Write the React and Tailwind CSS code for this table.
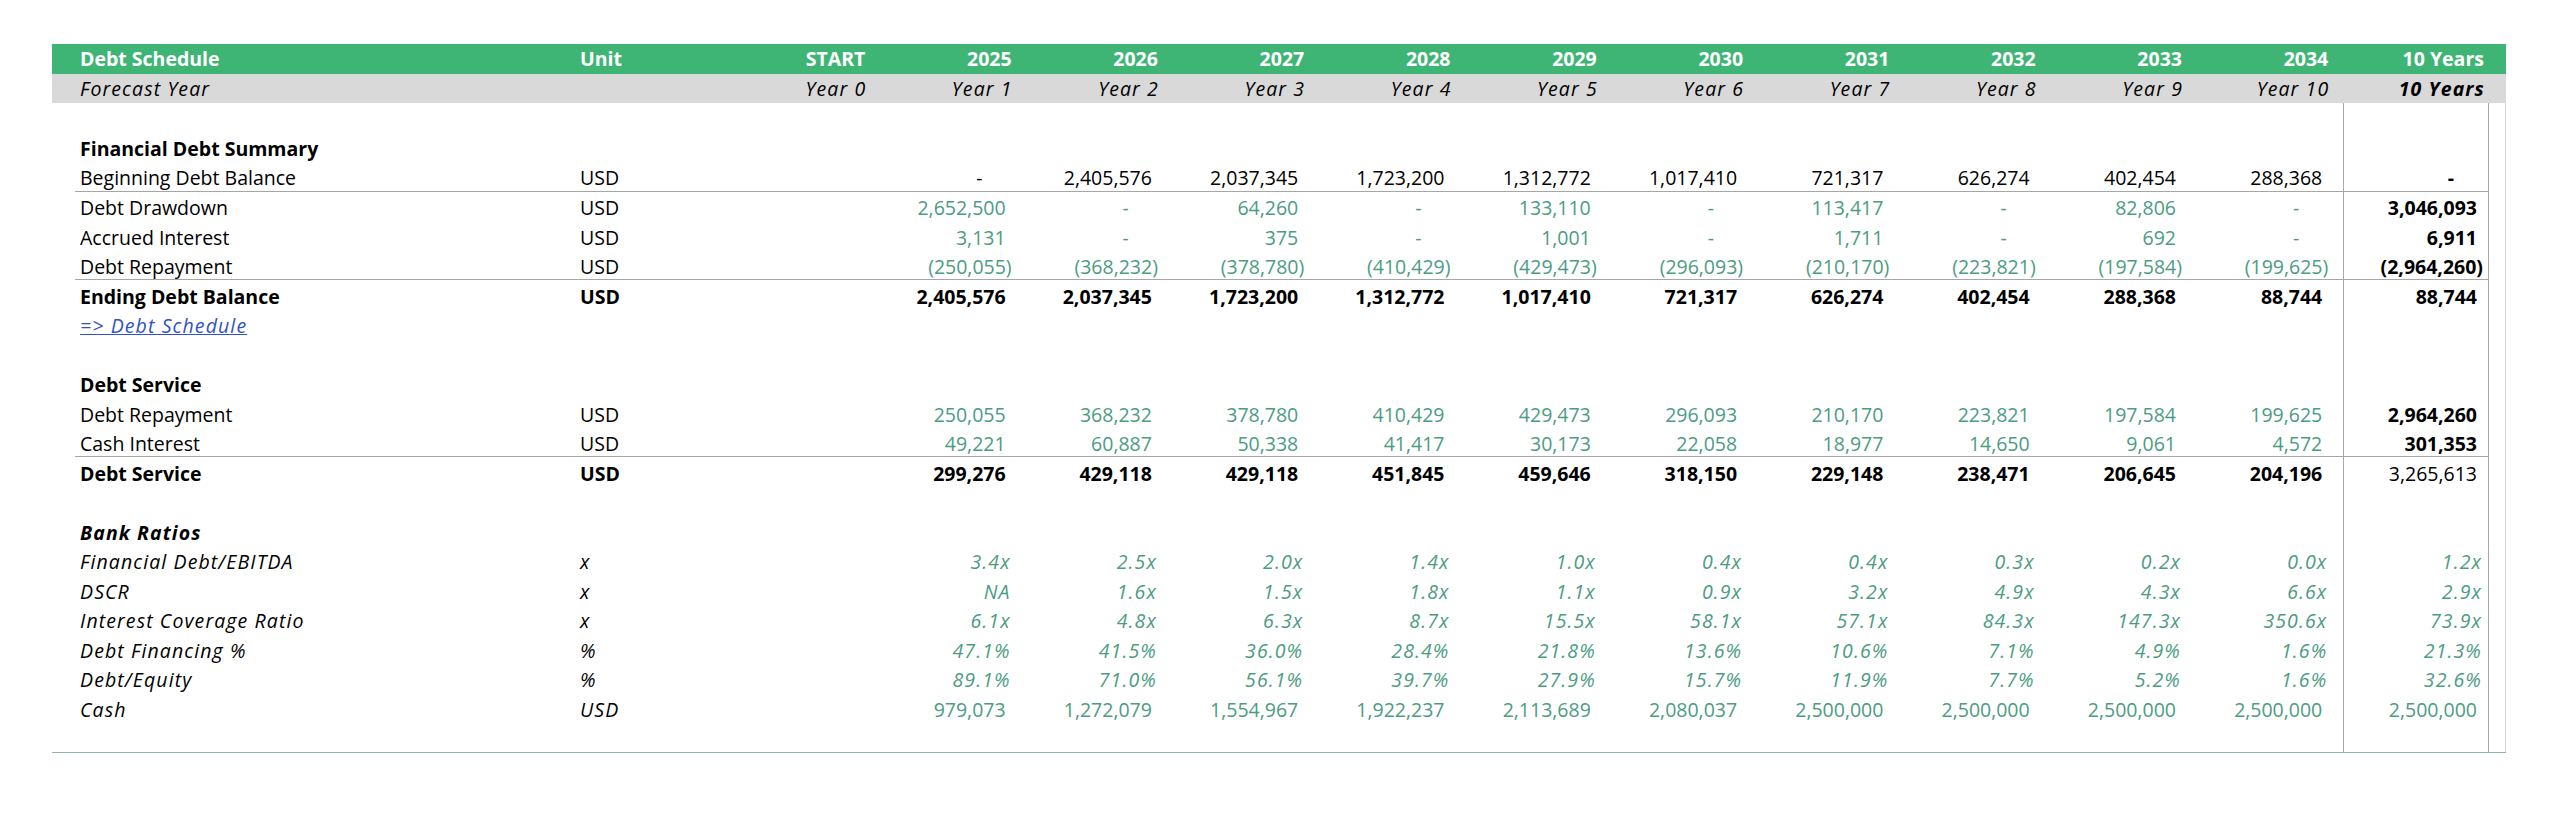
import React from 'react';

const YEARS = ['2025', '2026', '2027', '2028', '2029', '2030', '2031', '2032', '2033', '2034'];

// vals: START, 2025 ... 2034
const rows = [
  { type: 'blank' },
  { type: 'head', label: 'Financial Debt Summary' },
  {
    label: 'Beginning Debt Balance', unit: 'USD', color: 'black', line: true,
    vals: ['', '-', '2,405,576', '2,037,345', '1,723,200', '1,312,772', '1,017,410', '721,317', '626,274', '402,454', '288,368'],
    total: '-', totalBold: true,
  },
  {
    label: 'Debt Drawdown', unit: 'USD', color: 'green',
    vals: ['', '2,652,500', '-', '64,260', '-', '133,110', '-', '113,417', '-', '82,806', '-'],
    total: '3,046,093', totalBold: true,
  },
  {
    label: 'Accrued Interest', unit: 'USD', color: 'green',
    vals: ['', '3,131', '-', '375', '-', '1,001', '-', '1,711', '-', '692', '-'],
    total: '6,911', totalBold: true,
  },
  {
    label: 'Debt Repayment', unit: 'USD', color: 'green', line: true,
    vals: ['', '(250,055)', '(368,232)', '(378,780)', '(410,429)', '(429,473)', '(296,093)', '(210,170)', '(223,821)', '(197,584)', '(199,625)'],
    total: '(2,964,260)', totalBold: true,
  },
  {
    label: 'Ending Debt Balance', unit: 'USD', color: 'black', bold: true,
    vals: ['', '2,405,576', '2,037,345', '1,723,200', '1,312,772', '1,017,410', '721,317', '626,274', '402,454', '288,368', '88,744'],
    total: '88,744', totalBold: true,
  },
  { type: 'link', label: '=> Debt Schedule' },
  { type: 'blank' },
  { type: 'head', label: 'Debt Service' },
  {
    label: 'Debt Repayment', unit: 'USD', color: 'green',
    vals: ['', '250,055', '368,232', '378,780', '410,429', '429,473', '296,093', '210,170', '223,821', '197,584', '199,625'],
    total: '2,964,260', totalBold: true,
  },
  {
    label: 'Cash Interest', unit: 'USD', color: 'green', line: true,
    vals: ['', '49,221', '60,887', '50,338', '41,417', '30,173', '22,058', '18,977', '14,650', '9,061', '4,572'],
    total: '301,353', totalBold: true,
  },
  {
    label: 'Debt Service', unit: 'USD', color: 'black', bold: true,
    vals: ['', '299,276', '429,118', '429,118', '451,845', '459,646', '318,150', '229,148', '238,471', '206,645', '204,196'],
    total: '3,265,613',
  },
  { type: 'blank' },
  { type: 'head', label: 'Bank Ratios', italic: true },
  {
    label: 'Financial Debt/EBITDA', unit: 'x', color: 'green', italic: true, valItalic: true,
    vals: ['', '3.4x', '2.5x', '2.0x', '1.4x', '1.0x', '0.4x', '0.4x', '0.3x', '0.2x', '0.0x'],
    total: '1.2x', totalGreen: true,
  },
  {
    label: 'DSCR', unit: 'x', color: 'green', italic: true, valItalic: true,
    vals: ['', 'NA', '1.6x', '1.5x', '1.8x', '1.1x', '0.9x', '3.2x', '4.9x', '4.3x', '6.6x'],
    total: '2.9x', totalGreen: true,
  },
  {
    label: 'Interest Coverage Ratio', unit: 'x', color: 'green', italic: true, valItalic: true,
    vals: ['', '6.1x', '4.8x', '6.3x', '8.7x', '15.5x', '58.1x', '57.1x', '84.3x', '147.3x', '350.6x'],
    total: '73.9x', totalGreen: true,
  },
  {
    label: 'Debt Financing %', unit: '%', color: 'green', italic: true, valItalic: true,
    vals: ['', '47.1%', '41.5%', '36.0%', '28.4%', '21.8%', '13.6%', '10.6%', '7.1%', '4.9%', '1.6%'],
    total: '21.3%', totalGreen: true,
  },
  {
    label: 'Debt/Equity', unit: '%', color: 'green', italic: true, valItalic: true,
    vals: ['', '89.1%', '71.0%', '56.1%', '39.7%', '27.9%', '15.7%', '11.9%', '7.7%', '5.2%', '1.6%'],
    total: '32.6%', totalGreen: true,
  },
  {
    label: 'Cash', unit: 'USD', color: 'green', italic: true,
    vals: ['', '979,073', '1,272,079', '1,554,967', '1,922,237', '2,113,689', '2,080,037', '2,500,000', '2,500,000', '2,500,000', '2,500,000'],
    total: '2,500,000', totalGreen: true,
  },
  { type: 'blank' },
];

// excel style number padding: room for ")" on positives, dash sits left
function padFor(v, italic) {
  if (v === '-') return 'pr-[34px]';
  if (v.endsWith(')')) return 'pr-[5px]';
  if (italic) return 'pr-[6px]';
  return 'pr-[11px]';
}

// open sans italic runs narrower than the sheet's font, open it up a bit
const IT = 'italic tracking-[1.1px]';

function Shell({ children, line, total }) {
  return (
    <div className="flex h-[29.5px]">
      <div className="w-[23px] shrink-0" />
      <div className={`flex ${line ? 'border-b border-[#a6a6a6]' : ''}`}>
        {children}
        <div className="w-[9.7px] shrink-0" />
        <div className="w-[146px] shrink-0 flex items-center justify-end pt-[3px] border-x border-[#a8a8a8]">
          {total}
        </div>
      </div>
      <div className="w-[17px] shrink-0" />
    </div>
  );
}

function Row({ r }) {
  if (r.type === 'blank') {
    return (
      <Shell>
        <div className="w-[500px] shrink-0" />
        <div className="w-[149px] shrink-0" />
        <div className="w-[1609.3px] shrink-0" />
      </Shell>
    );
  }
  if (r.type === 'head' || r.type === 'link') {
    const cls = r.type === 'link'
      ? `${IT} underline text-[#3152c4]`
      : `font-bold ${r.italic ? IT : ''}`;
    return (
      <Shell>
        <div className={`w-[500px] shrink-0 pl-[5px] flex items-center pt-[3px] ${cls}`}>{r.label}</div>
        <div className="w-[149px] shrink-0" />
        <div className="w-[1609.3px] shrink-0" />
      </Shell>
    );
  }

  const labelCls = `${r.bold ? 'font-bold' : ''} ${r.italic ? IT : ''}`;
  const valColor = r.color === 'green' ? 'text-[#4c9c82]' : 'text-black';
  const totalCls = `${r.totalBold ? 'font-bold' : ''} ${r.totalGreen ? 'text-[#4c9c82]' : 'text-black'} ${r.valItalic ? IT : ''} ${padFor(r.total, r.valItalic)}`;

  return (
    <Shell line={r.line} total={<span className={totalCls}>{r.total}</span>}>
      <div className={`w-[500px] shrink-0 pl-[5px] flex items-center pt-[3px] ${labelCls}`}>{r.label}</div>
      <div className={`w-[149px] shrink-0 pl-[5px] flex items-center pt-[3px] ${labelCls}`}>{r.unit}</div>
      {r.vals.map((v, i) => (
        <div
          key={i}
          className={`w-[146.3px] shrink-0 flex items-center justify-end pt-[3px] ${valColor} ${r.bold ? 'font-bold' : ''} ${r.valItalic ? IT : ''} ${padFor(v, r.valItalic)}`}
        >
          {v}
        </div>
      ))}
    </Shell>
  );
}

export default function App() {
  return (
    <div className="w-[2560px] h-[818px] bg-white pl-[52px] pt-[44px] font-['Open_Sans',sans-serif] text-[19.5px] text-black">
      <div className="w-[2454px]">
        {/* green title row */}
        <div className="flex h-[29.5px] bg-[#3fb575] text-white font-bold">
          <div className="w-[23px] shrink-0" />
          <div className="w-[500px] shrink-0 pl-[5px] flex items-center">Debt Schedule</div>
          <div className="w-[149px] shrink-0 pl-[5px] flex items-center">Unit</div>
          {['START', ...YEARS].map((y) => (
            <div key={y} className="w-[146.3px] shrink-0 flex items-center justify-end pr-[5px]">{y}</div>
          ))}
          <div className="w-[9.7px] shrink-0" />
          <div className="w-[146px] shrink-0 flex items-center justify-end pr-[5px]">10 Years</div>
        </div>
        {/* forecast year row */}
        <div className={`flex h-[29.5px] bg-[#d9d9d9] ${IT}`}>
          <div className="w-[23px] shrink-0" />
          <div className="w-[500px] shrink-0 pl-[5px] flex items-center">Forecast Year</div>
          <div className="w-[149px] shrink-0" />
          {Array.from({ length: 11 }, (_, i) => (
            <div key={i} className="w-[146.3px] shrink-0 flex items-center justify-end pr-[4px]">Year {i}</div>
          ))}
          <div className="w-[9.7px] shrink-0" />
          <div className="w-[146px] shrink-0 flex items-center justify-end pr-[4px] font-bold">10 Years</div>
        </div>
        <div className="border-r border-[#d4d4d4]">
          {rows.map((r, i) => (
            <Row key={i} r={r} />
          ))}
        </div>
        <div className="h-px bg-[#8ab8b0]" />
      </div>
    </div>
  );
}
